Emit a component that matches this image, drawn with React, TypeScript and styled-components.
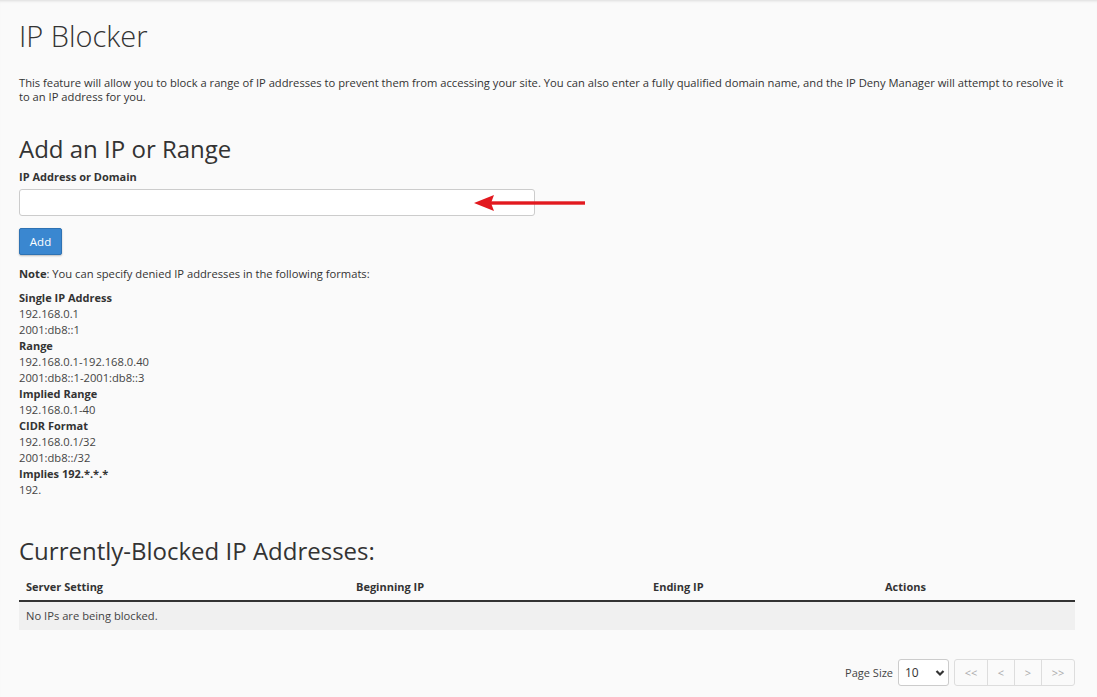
import React from 'react';
import styled, {createGlobalStyle} from 'styled-components';

const GlobalStyle = createGlobalStyle`
  html, body {
    margin: 0;
    padding: 0;
    background: #fafafa;
    font-family: "Open Sans", "Noto Sans", sans-serif;
    color: #333;
  }
`;

const Page = styled.div`
  min-height: 697px;
  box-sizing: border-box;
  padding: 0 22px 0 19px;
  background: #fafafa;
  box-shadow: inset 0 3px 3px -2px rgba(0, 0, 0, 0.12);
  overflow: hidden;
`;

const Title = styled.h1`
  margin: 17px 0 0;
  font-size: 29px;
  font-weight: 300;
  line-height: 38px;
  color: #333;
`;

const Intro = styled.p`
  margin: 21px 0 0;
  font-size: 11.2px;
  line-height: 14px;
  color: #333;
`;

const SectionTitle = styled.h2<{top: number}>`
  margin: ${({top}) => top}px 0 0;
  font-size: 24px;
  font-weight: 400;
  line-height: 30px;
  color: #333;
`;

const Label = styled.label`
  display: block;
  margin-top: 5px;
  font-size: 11px;
  font-weight: 700;
  line-height: 16px;
`;

const InputRow = styled.div`
  display: flex;
  align-items: center;
  margin-top: 4px;
`;

const Input = styled.input`
  width: 516px;
  height: 27px;
  box-sizing: border-box;
  border: 1px solid #ccc;
  border-radius: 3px;
  background: #fff;
  font: inherit;
  outline: none;
`;

const Arrow = styled.svg`
  margin-left: -62px;
`;

const AddButton = styled.button`
  display: block;
  margin-top: 12px;
  width: 43px;
  height: 27px;
  padding: 0;
  border: 1px solid #2e72b3;
  border-radius: 2px;
  background: #3a87d0;
  color: #fff;
  font-family: "Open Sans", sans-serif;
  font-size: 11.5px;
  box-shadow: 0 1px 2px rgba(0, 0, 0, 0.25);
`;

const Note = styled.p`
  margin: 12px 0 0;
  font-size: 11.2px;
  line-height: 14px;
`;

const Formats = styled.dl`
  margin: 9px 0 0;
  font-size: 11.2px;
  line-height: 16px;
`;

const FormatName = styled.dt`
  font-weight: 700;
  font-size: 11px;
`;

const FormatValue = styled.dd`
  margin: 0;
  color: #444;
`;

const Table = styled.table`
  width: 100%;
  margin-top: 8px;
  border-collapse: collapse;
  table-layout: fixed;
  font-size: 11.2px;
`;

const Th = styled.th<{w: number}>`
  width: ${({w}) => w - 14}px;
  text-align: left;
  padding: 6px 7px 6px;
  font-size: 11px;
  font-weight: 700;
  border-bottom: 2px solid #333;
  line-height: 14px;
`;

const EmptyCell = styled.td`
  padding: 6px 7px 7px;
  background: #f0f0f0;
  color: #444;
  line-height: 15px;
`;

const Pager = styled.div`
  display: flex;
  justify-content: flex-end;
  align-items: center;
  margin-top: 29px;
  font-size: 11px;
  color: #444;
`;

const SizeSelect = styled.div`
  display: flex;
  align-items: center;
  justify-content: space-between;
  margin-left: 5px;
  width: 51px;
  height: 27px;
  box-sizing: border-box;
  padding: 0 3px 0 6px;
  border: 1px solid #ccc;
  border-radius: 3px;
  background: #fff;
  font-size: 12px;
  color: #333;
`;

const PageButtons = styled.div`
  display: flex;
  margin-left: 5px;
  border: 1px solid #ddd;
  border-radius: 3px;
  background: #fafafa;
`;

const PageButton = styled.span<{w: number}>`
  display: flex;
  align-items: center;
  justify-content: center;
  width: ${({w}) => w}px;
  height: 25px;
  color: #aaa;
  font-size: 11px;
  & + & {
    border-left: 1px solid #ddd;
  }
`;

const formats: [string, string[]][] = [
  ['Single IP Address', ['192.168.0.1', '2001:db8::1']],
  ['Range', ['192.168.0.1-192.168.0.40', '2001:db8::1-2001:db8::3']],
  ['Implied Range', ['192.168.0.1-40']],
  ['CIDR Format', ['192.168.0.1/32', '2001:db8::/32']],
  ['Implies 192.*.*.*', ['192.']],
];

export default function App() {
  return (
    <Page>
      <GlobalStyle/>
      <Title>IP Blocker</Title>
      <Intro>
        This feature will allow you to block a range of IP addresses to prevent them from accessing your site. You can also enter a fully qualified domain name, and the IP Deny Manager will attempt to resolve it to an IP address for you.
      </Intro>

      <SectionTitle top={30}>Add an IP or Range</SectionTitle>
      <Label>IP Address or Domain</Label>
      <InputRow>
        <Input type="text"/>
        <Arrow width="114" height="18" viewBox="0 0 114 18">
          <path d="M1 9 L21 1 L18 9 L21 17 Z" fill="#e2191f"/>
          <rect x="18" y="7.3" width="94" height="3.4" fill="#e2191f"/>
        </Arrow>
      </InputRow>
      <AddButton>Add</AddButton>
      <Note><b>Note</b>: You can specify denied IP addresses in the following formats:</Note>
      <Formats>
        {formats.map(([name, values]) => (
          <React.Fragment key={name}>
            <FormatName>{name}</FormatName>
            {values.map(v => <FormatValue key={v}>{v}</FormatValue>)}
          </React.Fragment>
        ))}
      </Formats>

      <SectionTitle top={38}>Currently-Blocked IP Addresses:</SectionTitle>
      <Table>
        <thead>
          <tr>
            <Th w={330}>Server Setting</Th>
            <Th w={297}>Beginning IP</Th>
            <Th w={232}>Ending IP</Th>
            <Th w={197}>Actions</Th>
          </tr>
        </thead>
        <tbody>
          <tr>
            <EmptyCell colSpan={4}>No IPs are being blocked.</EmptyCell>
          </tr>
        </tbody>
      </Table>

      <Pager>
        Page Size
        <SizeSelect>
          10
          <svg width="10" height="8" viewBox="0 0 10 8">
            <path d="M1.5 2 L5 5.5 L8.5 2" stroke="#333" strokeWidth="2.2" fill="none"/>
          </svg>
        </SizeSelect>
        <PageButtons>
          <PageButton w={32}>&lt;&lt;</PageButton>
          <PageButton w={26}>&lt;</PageButton>
          <PageButton w={26}>&gt;</PageButton>
          <PageButton w={32}>&gt;&gt;</PageButton>
        </PageButtons>
      </Pager>
    </Page>
  );
}
